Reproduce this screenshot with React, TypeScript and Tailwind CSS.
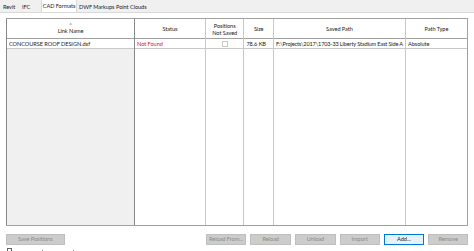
import React from "react";

const font = { fontFamily: 'Lato, "Noto Sans", sans-serif' };

function Btn({ label, w, active }: { label: string; w: string; active?: boolean }) {
  return (
    <div
      className={
        "h-[11px] flex items-center justify-center text-[5.6px] leading-none border whitespace-nowrap overflow-hidden " +
        w +
        (active
          ? " bg-[#e5f1fb] border-[#0078d7] text-[#222]"
          : " bg-[#cccccc] border-[#bfbfbf] text-[#8a8a8a]")
      }
    >
      {label}
    </div>
  );
}

export default function App() {
  const cols = [
    { w: "w-[131px]", h: "Link Name", star: true, cell: "CONCOURSE ROOF DESIGN.dxf", gray: true, left: true },
    { w: "w-[72px]", h: "Status", cell: "Not Found", red: true },
    { w: "w-[39px]", h: "Positions\nNot Saved", check: true },
    { w: "w-[30px]", h: "Size", cell: "78.6 KB" },
    { w: "w-[132px]", h: "Saved Path", cell: "F:\\Projects\\2017\\1703-33 Liberty Stadium East Side A", tight: true },
    { w: "w-[62px]", h: "Path Type", cell: "Absolute", last: true },
  ];
  return (
    <div className="w-[474px] h-[251px] bg-white text-[#1a1a1a] overflow-hidden flex flex-col tracking-[-0.05px]" style={font}>
      <div className="h-[13px] bg-[#f0f0f0] flex items-end border-b border-[#d9d9d9] pl-[2px] text-[5.6px] leading-none whitespace-nowrap">
        <div className="px-[1px] h-[11px] flex items-center w-[17px]">Revit</div>
        <div className="h-[11px] flex items-center ml-[3px] w-[15px]">IFC</div>
        <div className="h-[13px] flex items-center bg-white border border-b-0 border-[#d9d9d9] ml-[4px] w-[36px] justify-center">CAD Formats</div>
        <div className="h-[11px] flex items-center ml-[2px] w-[37px]">DWF Markups</div>
        <div className="h-[11px] flex items-center w-[33px]">Point Clouds</div>
      </div>
      <div className="flex-1 flex flex-col px-[6px] pt-[5px]">
        <div className="flex h-[208px] border-t border-b border-r border-[#a0a0a0]">
          {cols.map((c, i) => (
            <div
              key={i}
              className={
                "flex flex-col " +
                c.w +
                (c.left ? " border-l border-r border-[#888]" : "") +
                (!c.left && !c.last ? " border-r border-[#c8c8c8]" : "")
              }
            >
              <div className="h-[20px] border-b border-[#a0a0a0] flex flex-col items-center justify-center text-[5.6px] leading-[7px] text-center whitespace-pre bg-white">
                {c.star && <div className="text-[5px] leading-[4px] text-[#555]">˄</div>}
                {c.h}
              </div>
              <div className="h-[10px] border-b border-[#c8c8c8] flex items-center px-[2px] text-[5.6px] leading-none whitespace-nowrap overflow-hidden bg-white">
                {c.check ? (
                  <div className="mx-auto w-[6px] h-[6px] border border-[#c8c8c8] bg-white" />
                ) : (
                  <span className={(c.red ? "text-[#d11]" : "") + (c.tight ? " tracking-[-0.15px]" : "")}>{c.cell}</span>
                )}
              </div>
              <div className={"flex-1 " + (c.gray ? "bg-[#f0f0f0]" : "bg-white")} />
            </div>
          ))}
        </div>
        <div className="flex items-center mt-[7px] h-[12px]">
          <Btn label="Save Positions" w="w-[59px]" />
          <div className="w-[142px]" />
          <Btn label="Reload From..." w="w-[41px]" />
          <div className="w-[4px]" />
          <Btn label="Reload" w="w-[41px]" />
          <div className="w-[4px]" />
          <Btn label="Unload" w="w-[41px]" />
          <div className="w-[4px]" />
          <Btn label="Import" w="w-[40px]" />
          <div className="w-[4px]" />
          <Btn label="Add..." w="w-[41px]" active />
          <div className="w-[4px]" />
          <Btn label="Remove" w="w-[40px]" />
        </div>
        <div className="flex items-center mt-[3px] gap-[30px]">
          <div className="w-[5px] h-[5px] border border-[#666] ml-[1px]" />
          <div className="w-[1px] h-[2px] bg-[#888]" />
          <div className="w-[1px] h-[2px] bg-[#888]" />
        </div>
      </div>
    </div>
  );
}
